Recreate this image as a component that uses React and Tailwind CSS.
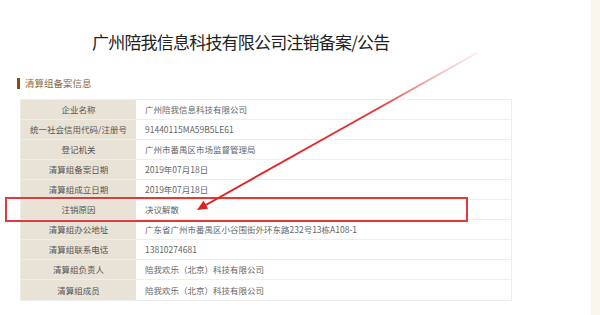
import React from "react";

const ROWS = [
  ["企业名称", "广州陪我信息科技有限公司"],
  ["统一社会信用代码/注册号", "91440115MA59B5LE61"],
  ["登记机关", "广州市番禺区市场监督管理局"],
  ["清算组备案日期", "2019年07月18日"],
  ["清算组成立日期", "2019年07月18日"],
  ["注销原因", "决议解散"],
  ["清算组办公地址", "广东省广州市番禺区小谷围街外环东路232号13栋A108-1"],
  ["清算组联系电话", "13810274681"],
  ["清算组负责人", "陪我欢乐（北京）科技有限公司"],
  ["清算组成员", "陪我欢乐（北京）科技有限公司"],
];

function Arrow() {
  // red annotation arrow drawn over the table
  return (
    <svg className="absolute left-0 top-0 pointer-events-none" width="600" height="315">
      <defs>
        <linearGradient id="arrowFade" x1="477" y1="53" x2="197" y2="210" gradientUnits="userSpaceOnUse">
          <stop offset="0" stopColor="#f4b8b8" stopOpacity="0.3" />
          <stop offset="0.35" stopColor="#e23a3a" />
          <stop offset="1" stopColor="#e01e1e" />
        </linearGradient>
      </defs>
      <line x1="477" y1="53" x2="204" y2="206" stroke="url(#arrowFade)" strokeWidth="2" />
      <polygon points="197,210 208,208.8 203.5,200.8" fill="#e01e1e" />
    </svg>
  );
}

export default function App() {
  return (
    <div className="relative w-[600px] h-[315px] overflow-hidden bg-white flex font-['Noto_Sans_CJK_SC',sans-serif]">
      <div className="w-[591px] flex flex-col">
        <h1 className="mt-[33px] ml-[92px] text-[17px] leading-[18px] tracking-[-0.8px] text-[#222] font-normal">
          广州陪我信息科技有限公司注销备案/公告
        </h1>

        <div className="mt-[26px] ml-[17px] flex items-center gap-[5px] h-[12px]">
          <span className="w-[3px] h-[11px] bg-[#8b4a14]" />
          <span className="text-[9.5px] leading-[12px] text-[#8a6848]">清算组备案信息</span>
        </div>

        <div className="mt-[10px] ml-[20px] w-[492px] border border-[#eeeeee]">
          {ROWS.map(([label, value], i) => (
            <div
              key={label}
              className={`flex h-[20px] ${i < ROWS.length - 1 ? "border-b border-[#eeeeee]" : ""}`}
            >
              <div className="w-[115px] shrink-0 bg-[#e9e2d6] flex items-center justify-center text-[8.5px] text-[#555]">
                {label}
              </div>
              <div className="flex-1 flex items-center pl-[9px] text-[8.5px] text-[#666]">
                {value}
              </div>
            </div>
          ))}
        </div>
      </div>
      <div className="w-[9px] bg-[#faf6ee]" />

      <div className="absolute left-[5px] top-[197px] w-[463px] h-[25px] border-2 border-[#e03a3a]" />
      <Arrow />
    </div>
  );
}
